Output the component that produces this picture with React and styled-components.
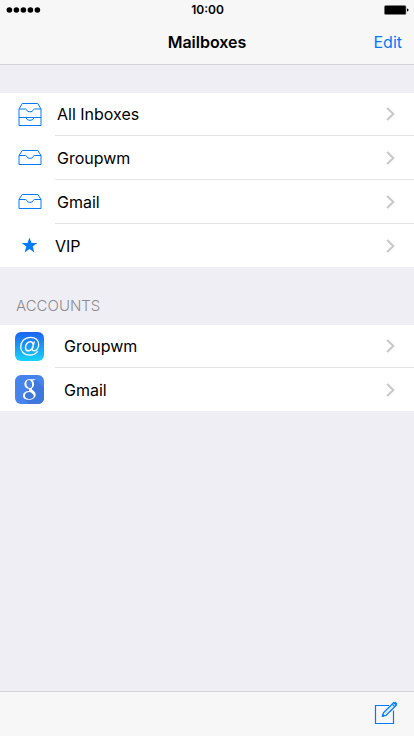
import React from "react";
import styled, { createGlobalStyle } from "styled-components";

const BLUE = "#007aff";

const GlobalStyle = createGlobalStyle`
  *, *::before, *::after { box-sizing: border-box; }
  body {
    margin: 0;
    background: #efeef4;
    color: #000;
    font-family: Inter, "Liberation Sans", sans-serif;
    font-size: 16px;
  }
`;

const Screen = styled.div`
  display: flex;
  flex-direction: column;
  min-height: 100vh;
`;

const Header = styled.header`
  background: #f7f7f7;
  border-bottom: 1px solid #d2d1d8;
`;

const StatusBar = styled.div`
  display: grid;
  grid-template-columns: 1fr auto 1fr;
  align-items: center;
  height: 20px;
  padding: 0 5px 0 6px;
`;

const Battery = styled.svg`
  justify-self: end;
`;

const Clock = styled.time`
  font-size: 12px;
  font-weight: 600;
  line-height: 20px;
`;

const NavBar = styled.div`
  display: grid;
  grid-template-columns: 1fr auto 1fr;
  align-items: center;
  height: 44px;
  padding: 0 12px;
`;

const Title = styled.h1`
  grid-column: 2;
  margin: 0;
  font-size: 16px;
  font-weight: 600;
  line-height: 20px;
`;

const TextButton = styled.button`
  justify-self: end;
  padding: 0;
  border: 0;
  background: none;
  color: ${BLUE};
  font: inherit;
  line-height: 20px;
  cursor: pointer;
`;

const Main = styled.main`
  flex: 1;
  padding-top: 28px;
`;

const SectionTitle = styled.h2`
  margin: 0;
  padding: 29px 16px 9px;
  color: #8b8b90;
  font-size: 15px;
  font-weight: 300;
  line-height: 20px;
`;

const List = styled.ul`
  margin: 0;
  padding: 0;
  list-style: none;
  background: #fff;
`;

const Item = styled.li`
  & + &::before {
    content: "";
    display: block;
    height: 1px;
    margin-left: 55px;
    background: #e4e3e8;
  }
`;

const RowLink = styled.a`
  display: flex;
  align-items: center;
  height: ${(p) => (p.$first ? 42 : 43)}px;
  padding: 0 19px 0 15px;
  color: #000;
  text-decoration: none;
`;

const IconSlot = styled.span`
  display: flex;
  justify-content: center;
  width: 29px;
`;

const Label = styled.span`
  flex: 1;
  padding-left: ${(p) => p.$inset}px;
  line-height: 20px;
`;

const AppTile = styled.svg`
  display: block;
  border-radius: 6px;
`;

const Toolbar = styled.footer`
  display: flex;
  justify-content: flex-end;
  align-items: center;
  height: 45px;
  padding: 0 16px 2px;
  background: #f7f7f7;
  border-top: 1px solid #d2d1d8;
`;

const IconButton = styled.button`
  display: flex;
  padding: 0;
  border: 0;
  background: none;
  color: ${BLUE};
  cursor: pointer;
`;

function SignalDots() {
  return (
    <svg width="36" height="8" viewBox="0 0 36 8" role="img" aria-label="Signal strength">
      {[0, 1, 2, 3, 4].map((i) => (
        <circle key={i} cx={3.4 + i * 7} cy="4" r="2.8" />
      ))}
    </svg>
  );
}

function BatteryIcon() {
  return (
    <Battery width="25" height="10" viewBox="0 0 25 10" role="img" aria-label="Battery full">
      <rect x="0.2" y="0.2" width="22" height="9.6" rx="1.6" fill="#555" />
      <rect x="0.9" y="0.9" width="20.6" height="8.2" rx="0.8" />
      <path d="M23 3.4q1.6.3 1.6 1.6T23 6.6z" />
    </Battery>
  );
}

function InboxIcon() {
  return (
    <svg width="24" height="17" viewBox="0 0 24 17" fill="none" stroke={BLUE} aria-hidden="true">
      <path d="M1 6.5 4.2 1.5H19.8L23 6.5V15.5H1z" />
      <path d="M1 6.5H7.6Q8.3 6.5 8.5 7.2A3.6 2.9 0 0 0 15.5 7.2Q15.7 6.5 16.4 6.5H23" />
    </svg>
  );
}

function AllInboxesIcon() {
  return (
    <svg width="24" height="25" viewBox="0 0 24 25" fill="none" stroke={BLUE} aria-hidden="true">
      <path d="M1 7 4.2 1.5H19.8L23 7V23.5H1z" />
      <path d="M1 7H7.6Q8.3 7 8.5 7.7A3.6 2.9 0 0 0 15.5 7.7Q15.7 7 16.4 7H23" />
      <path d="M1 15.5H8Q8.6 18.4 12 18.4T16 15.5H23M8 15.5H16" />
    </svg>
  );
}

function StarIcon() {
  return (
    <svg width="17" height="17" viewBox="0 0 17 17" fill={BLUE} aria-hidden="true">
      <path d="M8.5.4 10.5 6H16.3L11.7 9.6 13.4 15.400 8.500 12 3.600 15.400 5.300 9.600.7 6H6.500z" />
    </svg>
  );
}

function AtTile() {
  return (
    <AppTile width="29" height="29" viewBox="0 0 29 29" aria-hidden="true">
      <defs>
        <linearGradient id="at-fill" x1="0" y1="0" x2="0" y2="1">
          <stop offset="0" stopColor="#1a62f0" />
          <stop offset="1" stopColor="#1ad4fd" />
        </linearGradient>
      </defs>
      <rect width="29" height="29" fill="url(#at-fill)" />
      <g fill="none" stroke="#fff" strokeLinecap="round">
        <path
          strokeWidth="1.3"
          d="M22.6 19.4C20.8 21.8 18.2 23.2 14.8 23.2C9.2 23.2 5.7 19.7 5.7 14.8C5.7 9.3 9.9 5.3 15.4 5.3C20.4 5.3 23.7 8.3 23.7 12.6C23.7 16.4 21.4 18.9 19 18.9C17.6 18.9 17.1 18 17.5 16.5L19.2 10"
        />
        <path
          strokeWidth="1.5"
          d="M18.3 12.7C18 10.8 17 9.8 15.3 9.8C12.7 9.8 10.5 12.5 10.5 15.4C10.5 17.5 11.6 18.8 13.4 18.8C15.4 18.8 17 17.3 17.6 15.3"
        />
      </g>
    </AppTile>
  );
}

function GoogleTile() {
  return (
    <AppTile width="29" height="29" viewBox="0 0 29 29" aria-hidden="true">
      <rect width="29" height="29" fill="#4683ec" />
      <path d="M20.5 4.5 29 13V29H14L9 23 14 14z" fill="#3f78dc" />
      <path
        fill="#fff"
        fillRule="evenodd"
        d="M20.7 4.3H14.4C11.4 4.3 9.4 6.4 9.4 9.2C9.4 11.8 11.3 13.7 14 13.7C13.6 14.7 13.9 15.5 14.5 16.1C10.7 16.2 7.9 17.9 7.9 20.7C7.9 23.3 10.3 24.8 13.7 24.8C17.9 24.8 20.7 22.7 20.7 19.8C20.7 17.7 19.5 16.6 17.8 15.3C16.4 14.2 16.5 13.7 17.5 12.8C18.5 11.9 19.1 10.8 19.1 9.2C19.1 7.5 18.4 6.200 17.300 5.300H19.200zM14 5C15.900 5 17.100 7.200 17.100 9.900C17.100 11.800 16.200 12.900 14.700 12.900C12.600 12.900 11.400 10.700 11.400 8.400C11.400 6.400 12.300 5 14 5zM15 17C17.400 18.400 18.700 19.300 18.700 21C18.700 22.800 17.200 23.900 14.500 23.900C11.700 23.900 9.900 22.500 9.900 20.400C9.900 18.200 12.100 17 15 17z"
      />
    </AppTile>
  );
}

function Chevron() {
  return (
    <svg width="9" height="14" viewBox="0 0 9 14" fill="none" stroke="#c7c7cc" strokeWidth="2" aria-hidden="true">
      <path d="M1.2 1 7.3 7 1.2 13" />
    </svg>
  );
}

function ComposeIcon() {
  return (
    <svg width="24" height="24" viewBox="0 0 24 24" fill="none" stroke="currentColor" aria-hidden="true">
      <path strokeWidth="1.2" d="M15 4.5H1.5V22.500H19.500V9.500" />
      <path strokeWidth="1.2" fill="#d8eaff" d="M8.4 15.3 9.4 11.9 19.7 1.6 22.3 4.2 12 14.5z" />
      <path strokeWidth="1.2" d="M18.2 3.1 20.8 5.7" />
      <path fill="currentColor" d="M8.4 15.3 9 13.3 10.4 14.7z" />
      <path strokeWidth="2" d="M20.5 1.3 22.7 3.5" />
    </svg>
  );
}

const mailboxes = [
  { id: "all", name: "All Inboxes", Icon: AllInboxesIcon, inset: 13 },
  { id: "groupwm", name: "Groupwm", Icon: InboxIcon, inset: 13 },
  { id: "gmail", name: "Gmail", Icon: InboxIcon, inset: 13 },
  { id: "vip", name: "VIP", Icon: StarIcon, inset: 11 },
];

const accounts = [
  { id: "account-groupwm", name: "Groupwm", Icon: AtTile, inset: 20 },
  { id: "account-gmail", name: "Gmail", Icon: GoogleTile, inset: 20 },
];

function MailList({ items }) {
  return (
    <List>
      {items.map(({ id, name, Icon, inset }, index) => (
        <Item key={id}>
          <RowLink href={`#${id}`} $first={index === 0}>
            <IconSlot>
              <Icon />
            </IconSlot>
            <Label $inset={inset}>{name}</Label>
            <Chevron />
          </RowLink>
        </Item>
      ))}
    </List>
  );
}

export default function App() {
  return (
    <Screen>
      <GlobalStyle />
      <Header>
        <StatusBar>
          <SignalDots />
          <Clock>10:00</Clock>
          <BatteryIcon />
        </StatusBar>
        <NavBar>
          <Title>Mailboxes</Title>
          <TextButton type="button">Edit</TextButton>
        </NavBar>
      </Header>
      <Main>
        <MailList items={mailboxes} />
        <SectionTitle>ACCOUNTS</SectionTitle>
        <MailList items={accounts} />
      </Main>
      <Toolbar>
        <IconButton type="button" aria-label="Compose">
          <ComposeIcon />
        </IconButton>
      </Toolbar>
    </Screen>
  );
}
